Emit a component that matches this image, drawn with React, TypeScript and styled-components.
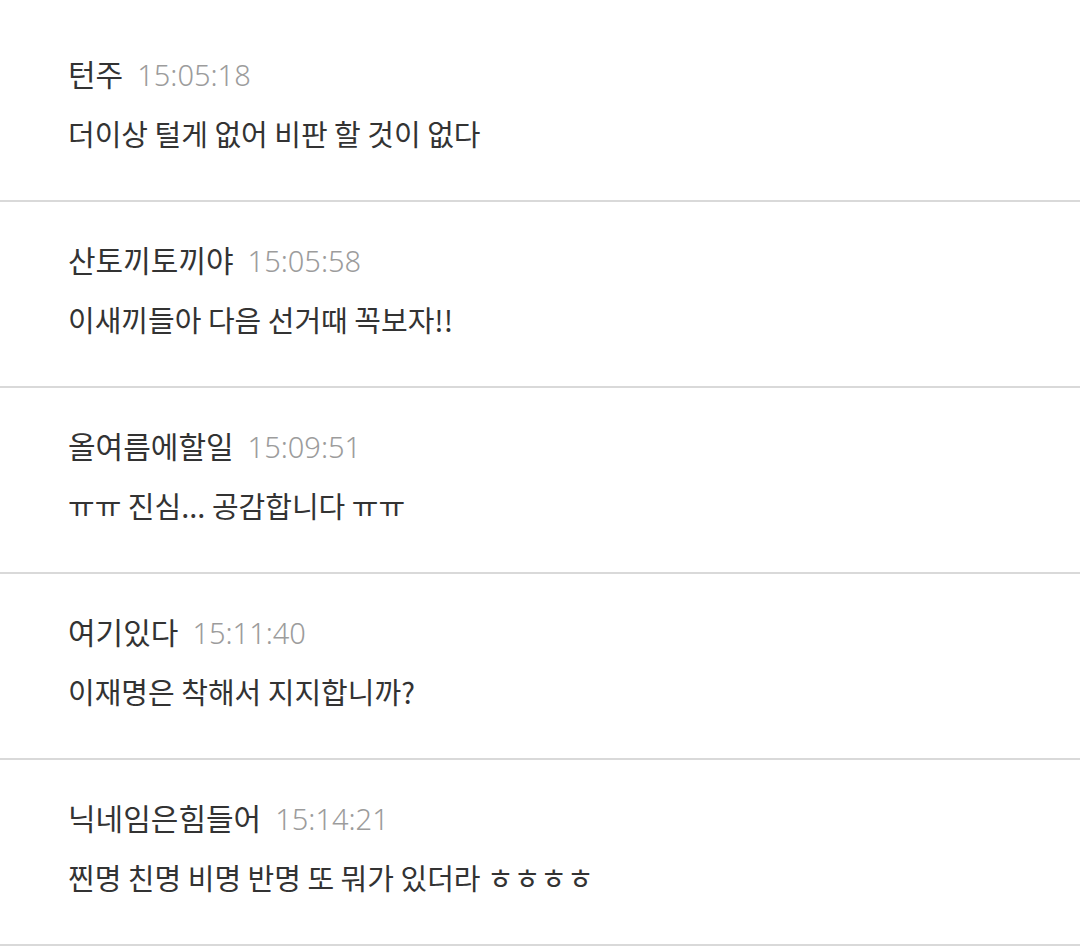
import React from "react";
import styled, { createGlobalStyle } from "styled-components";

const Global = createGlobalStyle`
  html, body { margin: 0; padding: 0; background: #fff; }
  body { font-family: "Noto Sans CJK KR", "Noto Sans", sans-serif; }
`;

const List = styled.ul`
  list-style: none;
  margin: 0;
  padding: 16px 0 0;
`;

const Item = styled.li`
  height: 184px;
  box-sizing: content-box;
  border-bottom: 2px solid #d9d9d9;
  padding: 0 68px;
  display: flex;
  flex-direction: column;
`;

const Header = styled.div`
  display: flex;
  align-items: baseline;
  gap: 14px;
  margin-top: 37px;
  height: 40px;
  line-height: 40px;
`;

const Name = styled.span`
  font-size: 30px;
  font-weight: 400;
  color: #333;
`;

const Time = styled.span`
  font-family: "Noto Sans", sans-serif;
  font-size: 29px;
  font-weight: 300;
  color: #9c9c9c;
`;

const Body = styled.p`
  margin: 20px 0 0;
  font-size: 29px;
  font-weight: 400;
  line-height: 40px;
  color: #333;
`;

const comments = [
  { name: "턴주", time: "15:05:18", text: "더이상 털게 없어 비판 할 것이 없다" },
  { name: "산토끼토끼야", time: "15:05:58", text: "이새끼들아 다음 선거때 꼭보자!!" },
  { name: "올여름에할일", time: "15:09:51", text: "ㅠㅠ 진심... 공감합니다 ㅠㅠ" },
  { name: "여기있다", time: "15:11:40", text: "이재명은 착해서 지지합니까?" },
  { name: "닉네임은힘들어", time: "15:14:21", text: "찐명 친명 비명 반명 또 뭐가 있더라 ㅎㅎㅎㅎ" },
];

export default function App() {
  return (
    <>
      <Global />
      <List>
        {comments.map((c) => (
          <Item key={c.time}>
            <Header>
              <Name>{c.name}</Name>
              <Time>{c.time}</Time>
            </Header>
            <Body>{c.text}</Body>
          </Item>
        ))}
      </List>
    </>
  );
}
